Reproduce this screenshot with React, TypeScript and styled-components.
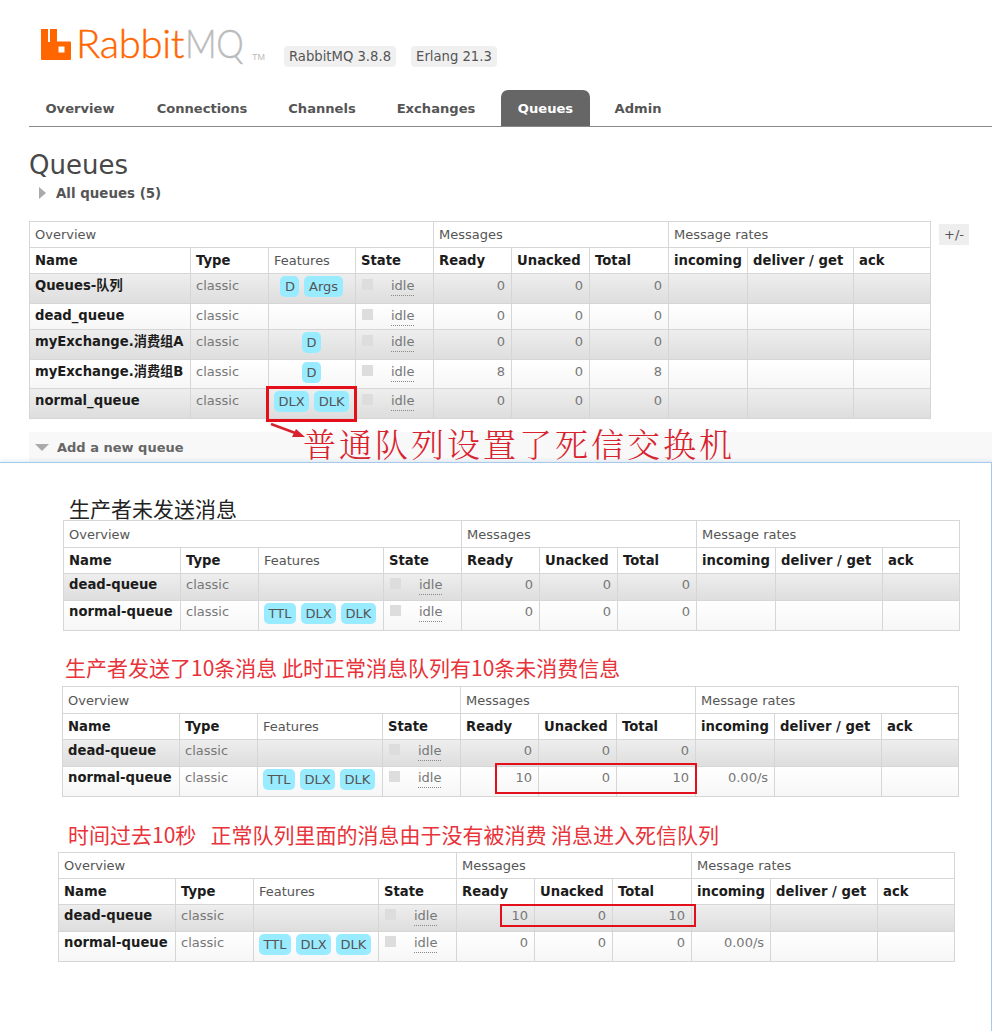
import React from "react";
import styled, { createGlobalStyle } from "styled-components";

const Global = createGlobalStyle`
  html, body { margin: 0; padding: 0; background: #fff; }
  body { width: 992px; height: 1031px; overflow: hidden; font-family: "DejaVu Sans", "Noto Sans CJK SC", sans-serif; font-size: 13px; color: #484848; }
`;

const Page = styled.div`display: flex; flex-direction: column; width: 992px; height: 1031px; overflow: hidden;`;
const Top = styled.section`position: relative; height: 462px; padding-left: 29px; box-sizing: border-box;`;
const Header = styled.header`display: flex; align-items: flex-start; height: 90px; padding: 29px 0 0 12px; box-sizing: border-box;`;
const Logo = styled.div`display: flex; align-items: flex-start; height: 34px;`;
const LogoWord = styled.span<{ $c: string; $w: number; $sx: number }>`
  display: block; width: ${p => p.$w}px; margin-top: -3px; font-family: "Lato", sans-serif; font-size: 40px; line-height: 34px; letter-spacing: -0.3px;
  color: ${p => p.$c}; font-weight: 300; -webkit-text-stroke: 0.4px ${p => p.$c}; white-space: nowrap;
  transform: scaleX(${p => p.$sx}); transform-origin: left center;
`;
const Tm = styled.span`font-family: "Liberation Sans", sans-serif; font-size: 9px; color: #bbb; margin: 23px 0 0 6px; width: 14px;`;
const Pills = styled.div`display: flex; gap: 15px; margin: 17px 0 0 18px;`;
const Pill = styled.span`background: #f0f0f0; border-radius: 4px; height: 21px; line-height: 21px; padding: 0 5px; font-size: 13.2px; color: #555;`;
const Nav = styled.nav`display: flex; height: 36px; border-bottom: 1px solid #888; box-sizing: content-box;`;
const Tab = styled.a<{ $on?: boolean; $w: number }>`
  width: ${p => p.$w}px; text-align: center; font-size: 13.1px; font-weight: 700; line-height: 37px; height: 36px;
  border-radius: 7px 7px 0 0; background: ${p => p.$on ? "#666" : "transparent"}; color: ${p => p.$on ? "#fff" : "#555"};
`;
const Title = styled.h1`margin: 23px 0 0; font-weight: 400; font-size: 26px; line-height: 30px; color: #484848; font-family: "DejaVu Sans", sans-serif; height: 30px;`;
const Section = styled.div`display: flex; align-items: center; gap: 10px; margin: 3px 0 0 10px; height: 20px; font-weight: 700; font-size: 13.4px; color: #555;`;
const Tri = styled.i`width: 0; height: 0; border-top: 6px solid transparent; border-bottom: 6px solid transparent; border-left: 7px solid #aaa;`;
const TriDown = styled.i`width: 0; height: 0; border-left: 7px solid transparent; border-right: 7px solid transparent; border-top: 7px solid #aaa;`;
const TableRow = styled.div`display: flex; align-items: flex-start; gap: 9px; margin-top: 18px;`;
const Toggle = styled.span`background: #eee; margin-top: 3px; width: 30px; height: 21px; line-height: 21px; text-align: center; font-size: 13px; color: #555;`;
const AddBand = styled.div`display: flex; align-items: center; gap: 8px; margin-top: 13px; height: 30px; background: #f8f8f8; padding-left: 6px; font-weight: 700; font-size: 13px; color: #666;`;
const Note = styled.div`position: absolute; left: 303px; top: 423px; font-family: "Noto Serif CJK SC", "Noto Sans CJK SC", sans-serif; font-size: 33px; line-height: 40px; letter-spacing: 3px; color: #d8232f; font-weight: 300; white-space: nowrap;`;
const Arrow = styled.svg`position: absolute; left: 268px; top: 420px;`;

const Lower = styled.section`flex: 1; position: relative; border-top: 1px solid #a9c9e8; border-right: 1px solid #a9c9e8; box-shadow: 0 -2px 3px rgba(169, 201, 232, .25); background: #fff;`;
const Heading = styled.div<{ $red?: boolean; $top: number; $left: number; $h: number }>`
  margin: ${p => p.$top}px 0 0 ${p => p.$left}px; height: ${p => p.$h}px; line-height: ${p => p.$h}px;
  font-family: "Noto Sans CJK SC", sans-serif; font-size: 21px; color: ${p => p.$red ? "#e8333a" : "#222"}; white-space: nowrap;
`;

const TableBox = styled.div<{ $left: number; $w: number }>`position: relative; margin-left: ${p => p.$left}px; width: ${p => p.$w}px;`;
const Table = styled.table`border-collapse: collapse; table-layout: fixed; width: 100%; font-size: 13px;`;
const Col = styled.col<{ $w: number }>`width: ${p => p.$w}px;`;
const HeadRow = styled.tr<{ $h: number }>`height: ${p => p.$h}px;`;
const Th = styled.th<{ $group?: boolean; $light?: boolean }>`
  border: 1px solid #d6d6d6; padding: 0 5px; text-align: left; box-sizing: border-box; background: #fff; white-space: nowrap;
  font-size: ${p => p.$group || p.$light ? 13 : 13.2}px;
  font-weight: ${p => p.$group || p.$light ? 400 : 700}; color: ${p => p.$group || p.$light ? "#555" : "#1c1c1c"};
`;
const Tr = styled.tr<{ $alt: boolean; $h: number }>`
  height: ${p => p.$h}px;
  background: ${p => p.$alt ? "linear-gradient(#eee, #ddd)" : "linear-gradient(#fff, #f6f6f6)"};
`;
const Td = styled.td<{ $right?: boolean; $bold?: boolean; $pad: number }>`
  border: 1px solid #d6d6d6; padding: ${p => p.$pad}px 6px 0 5px; vertical-align: top; white-space: nowrap; overflow: visible; box-sizing: border-box; line-height: 18px;
  text-align: ${p => p.$right ? "right" : "left"}; color: ${p => p.$bold ? "#1c1c1c" : "#777"}; font-weight: ${p => p.$bold ? 700 : 400};
  font-size: ${p => p.$bold ? 13.2 : 13}px;
`;
const Feats = styled.div<{ $center?: boolean; $mt: number }>`display: flex; gap: 5px; justify-content: ${p => p.$center ? "center" : "flex-start"}; margin-top: ${p => p.$mt}px;`;
const Badge = styled.span`background: #99ebff; color: #555; border-radius: 5px; height: 21px; line-height: 22px; padding: 0 4.5px; font-size: 13px;`;
const StateCell = styled.div`display: flex; align-items: flex-start; gap: 18px;`;
const Dot = styled.i`width: 11px; height: 11px; background: #ddd; margin: 2px 0 0 1px;`;
const Idle = styled.span`color: #777; border-bottom: 1px dotted #888; line-height: 18px;`;
const RedBox = styled.div<{ $x: number; $y: number; $w: number; $h: number; $b: number }>`
  position: absolute; left: ${p => p.$x}px; top: ${p => p.$y}px; width: ${p => p.$w}px; height: ${p => p.$h}px;
  border: ${p => p.$b}px solid #e3101c; box-sizing: border-box; pointer-events: none;
`;

type Row = { name: string; feats: string[]; center?: boolean; r: string; u: string; t: string; rate?: string; h: number };
type Props = { cols: number[]; rows: Row[]; headH: [number, number]; pad: number };

function QueueTable({ cols, rows, headH, pad }: Props) {
  return (
    <Table>
      <colgroup>{cols.map((c, i) => <Col key={i} $w={c} />)}</colgroup>
      <thead>
        <HeadRow $h={headH[0]}><Th colSpan={4} $group>Overview</Th><Th colSpan={3} $group>Messages</Th><Th colSpan={3} $group>Message rates</Th></HeadRow>
        <HeadRow $h={headH[1]}>
          <Th>Name</Th><Th>Type</Th><Th $light>Features</Th><Th>State</Th><Th>Ready</Th><Th>Unacked</Th><Th>Total</Th><Th>incoming</Th><Th>deliver / get</Th><Th>ack</Th>
        </HeadRow>
      </thead>
      <tbody>
        {rows.map((q, i) => (
          <Tr key={q.name} $alt={i % 2 === 0} $h={q.h}>
            <Td $pad={pad} $bold>{q.name}</Td>
            <Td $pad={pad}>classic</Td>
            <Td $pad={pad}><Feats $mt={2 - pad} $center={q.center}>{q.feats.map(f => <Badge key={f}>{f}</Badge>)}</Feats></Td>
            <Td $pad={pad}><StateCell><Dot /><Idle>idle</Idle></StateCell></Td>
            <Td $pad={pad} $right>{q.r}</Td><Td $pad={pad} $right>{q.u}</Td><Td $pad={pad} $right>{q.t}</Td>
            <Td $pad={pad} $right>{q.rate}</Td><Td $pad={pad} /><Td $pad={pad} />
          </Tr>
        ))}
      </tbody>
    </Table>
  );
}

const colsA = [161, 78, 87, 78, 78, 78, 79, 79, 106, 77];
const colsB = [117, 78, 125, 78, 78, 78, 79, 79, 107, 77];

const topRows: Row[] = [
  { name: "Queues-队列", feats: ["D", "Args"], center: true, r: "0", u: "0", t: "0", h: 30 },
  { name: "dead_queue", feats: [], r: "0", u: "0", t: "0", h: 26 },
  { name: "myExchange.消费组A", feats: ["D"], center: true, r: "0", u: "0", t: "0", h: 30 },
  { name: "myExchange.消费组B", feats: ["D"], center: true, r: "8", u: "0", t: "8", h: 29 },
  { name: "normal_queue", feats: ["DLX", "DLK"], center: true, r: "0", u: "0", t: "0", h: 30 },
];
const ttl = ["TTL", "DLX", "DLK"];

export default function App() {
  return (
    <Page>
      <Global />
      <Top>
        <Header>
          <Logo>
            <svg width="30" height="31" viewBox="0 0 30 31" style={{ marginRight: 5 }}>
              <path fill="#f60" fillRule="evenodd" d="M0 0h7v13h2V0h7v12.500H29a1 1 0 0 1 1 1V30a1 1 0 0 1-1 1H1a1 1 0 0 1-1-1V0z M17.500 17.500v6h6v-6z" />
            </svg>
            <LogoWord $c="#f60" $w={109} $sx={1}>Rabbit</LogoWord>
            <LogoWord $c="#bbb" $w={61} $sx={0.87}>MQ</LogoWord>
            <Tm>TM</Tm>
          </Logo>
          <Pills><Pill>RabbitMQ 3.8.8</Pill><Pill>Erlang 21.3</Pill></Pills>
        </Header>
        <Nav>
          <Tab $w={102}>Overview</Tab><Tab $w={142}>Connections</Tab><Tab $w={98}>Channels</Tab>
          <Tab $w={130}>Exchanges</Tab><Tab $w={89} $on>Queues</Tab><Tab $w={96}>Admin</Tab>
        </Nav>
        <Title>Queues</Title>
        <Section><Tri />All queues (5)</Section>
        <TableRow>
          <TableBox $left={0} $w={901}>
            <QueueTable pad={3} cols={colsA} rows={topRows} headH={[26, 26]} />
          </TableBox>
          <Toggle>+/-</Toggle>
        </TableRow>
        <AddBand><TriDown />Add a new queue</AddBand>
        <RedBox $x={266} $y={386} $w={91} $h={36} $b={3} />
        <Arrow width="40" height="22" viewBox="0 0 40 22">
          <path d="M3 4 L30 14" stroke="#d8232f" strokeWidth="2.500" fill="none" />
          <path d="M37 17 L24 17 L28 9 Z" fill="#d8232f" />
        </Arrow>
        <Note>普通队列设置了死信交换机</Note>
      </Top>
      <Lower>
        <Heading $left={69} $top={33} $h={24}>生产者未发送消息</Heading>
        <TableBox $left={63} $w={896}>
          <QueueTable pad={2} cols={colsB} headH={[27, 26]} rows={[
            { name: "dead-queue", feats: [], r: "0", u: "0", t: "0", h: 27 },
            { name: "normal-queue", feats: ttl, r: "0", u: "0", t: "0", h: 30 },
          ]} />
        </TableBox>
        <Heading $red $left={65} $top={17} $h={38}>生产者发送了10条消息 此时正常消息队列有10条未消费信息</Heading>
        <TableBox $left={62} $w={896}>
          <QueueTable pad={2} cols={colsB} headH={[27, 26]} rows={[
            { name: "dead-queue", feats: [], r: "0", u: "0", t: "0", h: 27 },
            { name: "normal-queue", feats: ttl, r: "10", u: "0", t: "10", rate: "0.00/s", h: 30 },
          ]} />
          <RedBox $x={433} $y={77} $w={202} $h={31} $b={2} />
        </TableBox>
        <Heading $red $left={68} $top={19} $h={36}>时间过去10秒&nbsp;&nbsp;&nbsp;正常队列里面的消息由于没有被消费 消息进入死信队列</Heading>
        <TableBox $left={58} $w={896}>
          <QueueTable pad={2} cols={colsB} headH={[26, 26]} rows={[
            { name: "dead-queue", feats: [], r: "10", u: "0", t: "10", h: 27 },
            { name: "normal-queue", feats: ttl, r: "0", u: "0", t: "0", rate: "0.00/s", h: 30 },
          ]} />
          <RedBox $x={442} $y={52} $w={196} $h={23} $b={2} />
        </TableBox>
      </Lower>
    </Page>
  );
}
